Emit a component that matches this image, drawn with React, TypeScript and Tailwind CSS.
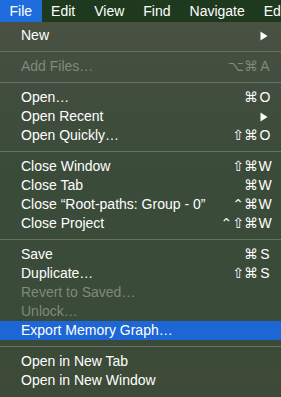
import React from "react";

type Item =
  | { kind: "sep" }
  | {
      kind: "item";
      label: string;
      mods?: string;
      keyChar?: string;
      sub?: boolean;
      disabled?: boolean;
      active?: boolean;
    };

const items: Item[] = [
  { kind: "item", label: "New", sub: true },
  { kind: "sep" },
  { kind: "item", label: "Add Files…", mods: "⌥⌘", keyChar: "A", disabled: true },
  { kind: "sep" },
  { kind: "item", label: "Open…", mods: "⌘", keyChar: "O" },
  { kind: "item", label: "Open Recent", sub: true },
  { kind: "item", label: "Open Quickly…", mods: "⇧⌘", keyChar: "O" },
  { kind: "sep" },
  { kind: "item", label: "Close Window", mods: "⇧⌘", keyChar: "W" },
  { kind: "item", label: "Close Tab", mods: "⌘", keyChar: "W" },
  { kind: "item", label: "Close “Root-paths: Group - 0”", mods: "⌃⌘", keyChar: "W" },
  { kind: "item", label: "Close Project", mods: "⌃⇧⌘", keyChar: "W" },
  { kind: "sep" },
  { kind: "item", label: "Save", mods: "⌘", keyChar: "S" },
  { kind: "item", label: "Duplicate…", mods: "⇧⌘", keyChar: "S" },
  { kind: "item", label: "Revert to Saved…", disabled: true },
  { kind: "item", label: "Unlock…", disabled: true },
  { kind: "item", label: "Export Memory Graph…", active: true },
  { kind: "sep" },
  { kind: "item", label: "Open in New Tab" },
  { kind: "item", label: "Open in New Window" },
];

const font = { fontFamily: '"Liberation Sans", Arial, "DejaVu Sans", sans-serif' };

export default function App() {
  return (
    <div
      className="w-[281px] h-[397px] overflow-hidden flex flex-col text-[14px] text-white"
      style={font}
    >
      <div className="h-[22px] flex items-center bg-[#1e391d] shrink-0 overflow-hidden">
        <div className="h-full flex items-center px-[9.5px] bg-[#1f6ddd]">File</div>
        <div className="h-full flex items-center px-[9.5px]">Edit</div>
        <div className="h-full flex items-center px-[9.5px]">View</div>
        <div className="h-full flex items-center px-[9.5px]">Find</div>
        <div className="h-full flex items-center px-[9.5px]">Navigate</div>
        <div className="h-full flex items-center pl-[9.5px] whitespace-nowrap">Ed</div>
      </div>
      <div className="flex-1 flex flex-col pt-[4px] bg-[linear-gradient(180deg,#4a5143_0%,#424e3f_15%,#3a4b39_40%,#3a4b39_75%,#3d4a37_100%)]">
        {items.map((it, i) =>
          it.kind === "sep" ? (
            <div key={i} className="h-[12px] flex items-center">
              <div className="w-full h-px bg-[#667261]" />
            </div>
          ) : (
            <div
              key={i}
              className={
                "h-[19px] flex items-center pl-[21px] pr-[9px] whitespace-nowrap " +
                (it.active ? "bg-[#1d66d6] " : "") +
                (it.disabled ? "text-[#7f8a7a]" : "text-white")
              }
            >
              <span className="flex-1">{it.label}</span>
              {it.sub && (
                <svg width="8" height="10" viewBox="0 0 8 10" className="mr-[4px]">
                  <path d="M0.5 0.5 L7.5 5 L0.5 9.5 Z" fill="currentColor" />
                </svg>
              )}
              {it.keyChar && (
                <span className="flex items-center">
                  <span
                    style={{ fontFamily: '"DejaVu Sans", sans-serif' }}
                    className="text-[14px]"
                  >
                    {it.mods}
                  </span>
                  <span className="w-[14px] text-center">{it.keyChar}</span>
                </span>
              )}
            </div>
          )
        )}
      </div>
    </div>
  );
}
